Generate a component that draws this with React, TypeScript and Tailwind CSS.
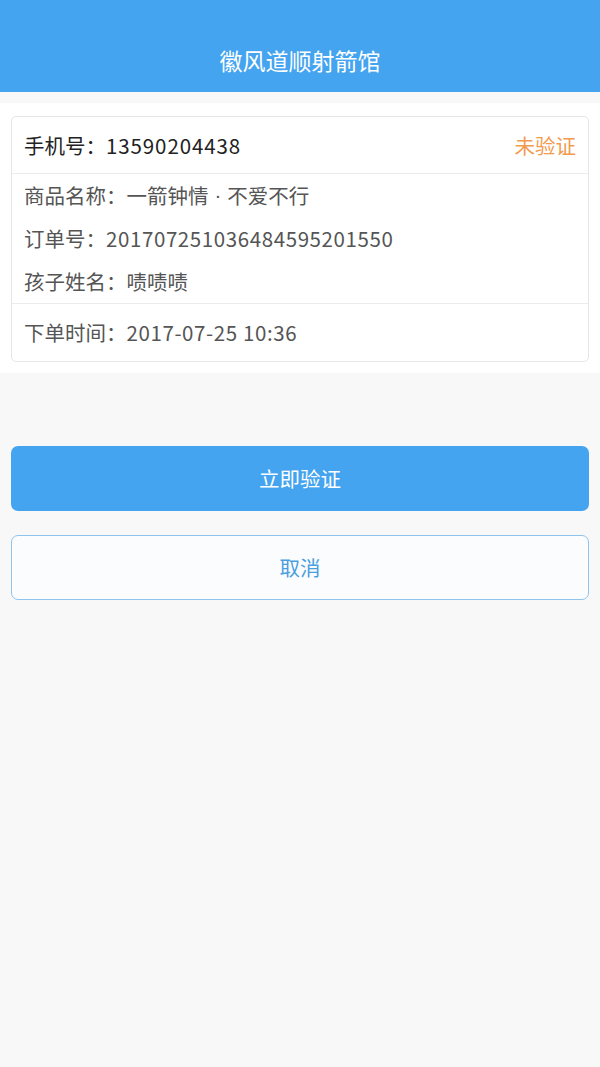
import React from "react";

const font = { fontFamily: '"Noto Sans CJK SC", "Noto Sans", sans-serif' };

function Num({ children }: { children: React.ReactNode }) {
  return <span className="tracking-[0.6px]">{children}</span>;
}

export default function App() {
  return (
    <div className="min-h-[1067px] w-[600px] bg-[#f8f8f8]" style={font}>
      <div className="h-[92px] bg-[#44a4ef] flex items-end justify-center pb-[17px]">
        <span className="text-white text-[23px] leading-[30px]">徽风道顺射箭馆</span>
      </div>
      <div className="mt-[11px] bg-white px-[11px] pt-[13px] pb-[11px]">
        <div className="rounded-[5px] border border-[#e6e6e6] bg-white">
          <div className="h-[57px] flex items-center justify-between px-[12px] border-b border-[#ececec]">
            <span className="text-[20.5px] text-[#222]">
              手机号：<span className="tracking-[0.9px]">13590204438</span>
            </span>
            <span className="text-[20.5px] text-[#f29a4e]">未验证</span>
          </div>
          <div className="border-b border-[#ececec] text-[20.5px] text-[#555] px-[12px]">
            <div className="h-[43px] flex items-center">
              商品名称：一箭钟情
              <span className="px-[6px]" style={{ fontFamily: '"Liberation Sans", sans-serif' }}>·</span>
              不爱不行
            </div>
            <div className="h-[43px] flex items-center">
              订单号：<Num>201707251036484595201550</Num>
            </div>
            <div className="h-[43px] flex items-center">孩子姓名：啧啧啧</div>
          </div>
          <div className="h-[57px] flex items-center px-[12px] text-[20.5px] text-[#555]">
            下单时间：<Num>2017-07-25 10:36</Num>
          </div>
        </div>
      </div>
      <div className="px-[11px] pt-[73px] flex flex-col gap-[24px]">
        <button className="h-[65px] w-full rounded-[7px] bg-[#44a4ef] text-white text-[20.5px]">
          立即验证
        </button>
        <button className="h-[65px] w-full rounded-[7px] border border-[#8ec4ee] bg-[#fbfcfd] text-[#4a9fe0] text-[20.5px]">
          取消
        </button>
      </div>
    </div>
  );
}
